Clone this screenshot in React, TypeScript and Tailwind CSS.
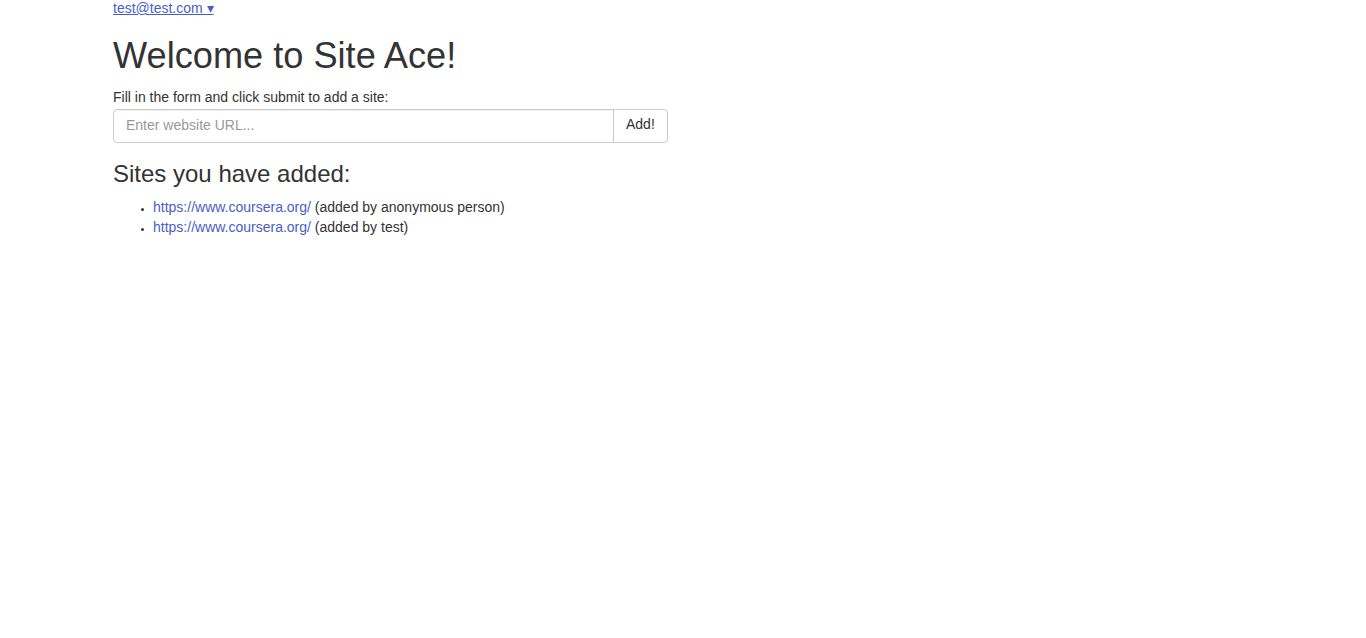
export default function App() {
  const sites = [
    { url: 'https://www.coursera.org/', by: 'anonymous person' },
    { url: 'https://www.coursera.org/', by: 'test' },
  ]

  return (
    <div className="min-h-screen bg-white text-[#333] text-[14px] leading-5" style={{ fontFamily: '"Liberation Sans", Arial, sans-serif' }}>
      <div className="pl-[113px]">
        <a href="#" className="block h-4 leading-4 text-[#4a5ec8] underline w-fit">
          test@test.com ▾
        </a>

        <h1 className="mt-5 text-[36.2px] leading-[39.6px] font-normal">Welcome to Site Ace!</h1>

        <form className="mt-[11px]" onSubmit={e => e.preventDefault()}>
          <label className="block leading-5">Fill in the form and click submit to add a site:</label>
          <div className="mt-[2px] flex w-[555px]">
            <input
              type="text"
              placeholder="Enter website URL..."
              className="h-[34px] w-[501px] px-3 pb-[2px] border border-[#ccc] rounded-l-[4px] shadow-[inset_0_1px_1px_rgba(0,0,0,0.075)] placeholder:text-[#999] outline-none"
            />
            <button type="submit" className="h-[34px] -ml-px px-3 pb-[3px] border border-[#ccc] rounded-r-[4px] bg-white text-[#333]">
              Add!
            </button>
          </div>
        </form>

        <h3 className="mt-[18px] text-[24px] leading-[26.4px] font-normal">Sites you have added:</h3>

        <ul className="mt-[10px] list-disc pl-10 marker:text-[9px]">
          {sites.map((s, i) => (
            <li key={i}>
              <a href={s.url} className="text-[#4a5ec8]">{s.url}</a> (added by {s.by})
            </li>
          ))}
        </ul>
      </div>
    </div>
  )
}
